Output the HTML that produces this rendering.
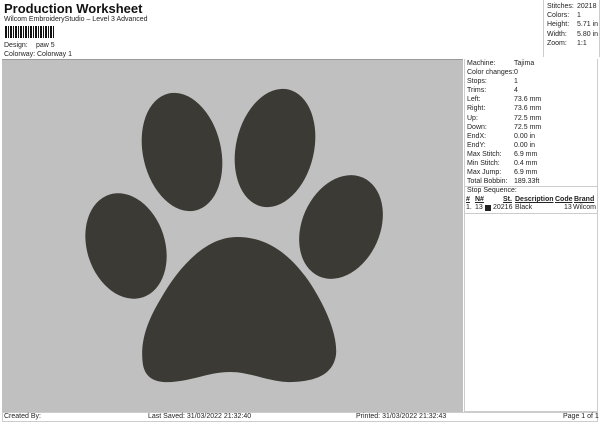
<!DOCTYPE html>
<html><head><style>
body{margin:0;width:600px;height:424px;background:#fff;font-family:"Liberation Sans",sans-serif;color:#222;position:relative;overflow:hidden}
.a{position:absolute;font-size:7px;white-space:nowrap}
.t{position:absolute;left:4px;top:1px;font-size:13px;font-weight:bold;color:#111}
</style></head><body>
<div class="t">Production Worksheet</div>
<div class="a" style="left:4px;top:16px">Wilcom EmbroideryStudio – Level 3 Advanced</div>
<div style="position:absolute;left:5px;top:26px;width:50px;height:12px;background:repeating-linear-gradient(90deg,#111 0 2px,#fff 2px 3px,#111 3px 4px,#fff 4px 5px)"></div>
<div class="a" style="left:4px;top:42px">Design:</div><div class="a" style="left:36px;top:42px">paw 5</div>
<div class="a" style="left:4px;top:51px">Colorway:</div><div class="a" style="left:37px;top:51px">Colorway 1</div>
<div style="position:absolute;left:543px;top:0;width:55px;height:57px;border-left:1px solid #ccc;border-right:1px solid #ccc"></div>
<div class="a" style="left:547px;top:2px;line-height:9.2px">Stitches:<br>Colors:<br>Height:<br>Width:<br>Zoom:</div>
<div class="a" style="left:577px;top:2px;line-height:9.2px">20218<br>1<br>5.71 in<br>5.80 in<br>1:1</div>
<div style="position:absolute;left:2px;top:59px;width:461px;height:353px;background:#c0c0c0;border-top:1px solid #999"></div>
<div style="position:absolute;left:464px;top:59px;width:134px;height:353px;border:1px solid #ccc;border-top:none;box-sizing:border-box"></div>
<div class="a" style="left:467px;top:59px;line-height:9.1px">Machine:<br>Color changes:<br>Stops:<br>Trims:<br>Left:<br>Right:<br>Up:<br>Down:<br>EndX:<br>EndY:<br>Max Stitch:<br>Min Stitch:<br>Max Jump:<br>Total Bobbin:</div>
<div class="a" style="left:514px;top:59px;line-height:9.1px">Tajima<br>0<br>1<br>4<br>73.6 mm<br>73.6 mm<br>72.5 mm<br>72.5 mm<br>0.00 in<br>0.00 in<br>6.9 mm<br>0.4 mm<br>6.9 mm<br>189.33ft</div>
<div style="position:absolute;left:464px;top:186px;width:134px;border-top:1px solid #ccc"></div>
<div class="a" style="left:467px;top:187px">Stop Sequence:</div>
<div class="a" style="left:466px;top:196px;font-weight:bold;text-decoration:underline">#</div>
<div class="a" style="left:475px;top:196px;font-weight:bold;text-decoration:underline">N#</div>
<div class="a" style="left:503px;top:196px;font-weight:bold;text-decoration:underline">St.</div>
<div class="a" style="left:515px;top:196px;font-weight:bold;text-decoration:underline">Description</div>
<div class="a" style="left:555px;top:196px;font-weight:bold;text-decoration:underline">Code</div>
<div class="a" style="left:574px;top:196px;font-weight:bold;text-decoration:underline">Brand</div>
<div class="a" style="left:466px;top:204px">1.</div><div class="a" style="left:475px;top:204px">13</div>
<div style="position:absolute;left:485px;top:205px;width:6px;height:6px;background:#222"></div>
<div class="a" style="left:493px;top:204px">20216</div><div class="a" style="left:515px;top:204px">Black</div>
<div class="a" style="left:564px;top:204px">13</div><div class="a" style="left:573px;top:204px">Wilcom</div>
<div style="position:absolute;left:464px;top:213px;width:134px;border-top:1px solid #ccc"></div>
<svg style="position:absolute;left:0;top:0" width="600" height="424">
<g fill="#3b3a34">
<ellipse cx="182" cy="152" rx="39" ry="60" transform="rotate(-13 182 152)"/>
<ellipse cx="275" cy="148" rx="39" ry="60" transform="rotate(13 275 148)"/>
<ellipse cx="126" cy="246" rx="39" ry="54" transform="rotate(-18 126 246)"/>
<ellipse cx="341" cy="227" rx="39" ry="54" transform="rotate(24 341 227)"/>
<path d="M237,237 C205,237 178,268 160,300 C145,325 140,345 143,365 C146,380 158,383 172,382 C195,380 210,372 230,372 C252,372 270,383 293,382 C315,381 333,375 336,355 C338,335 325,305 308,280 C290,255 268,237 237,237 Z"/>
</g></svg>
<div style="position:absolute;left:2px;top:412px;width:596px;height:10px;border:1px solid #ccc;box-sizing:border-box"></div>
<div class="a" style="left:4px;top:413px">Created By:</div>
<div class="a" style="left:148px;top:413px">Last Saved: 31/03/2022 21:32:40</div>
<div class="a" style="left:356px;top:413px">Printed: 31/03/2022 21:32:43</div>
<div class="a" style="left:563px;top:413px">Page 1 of 1</div>
</body></html>
